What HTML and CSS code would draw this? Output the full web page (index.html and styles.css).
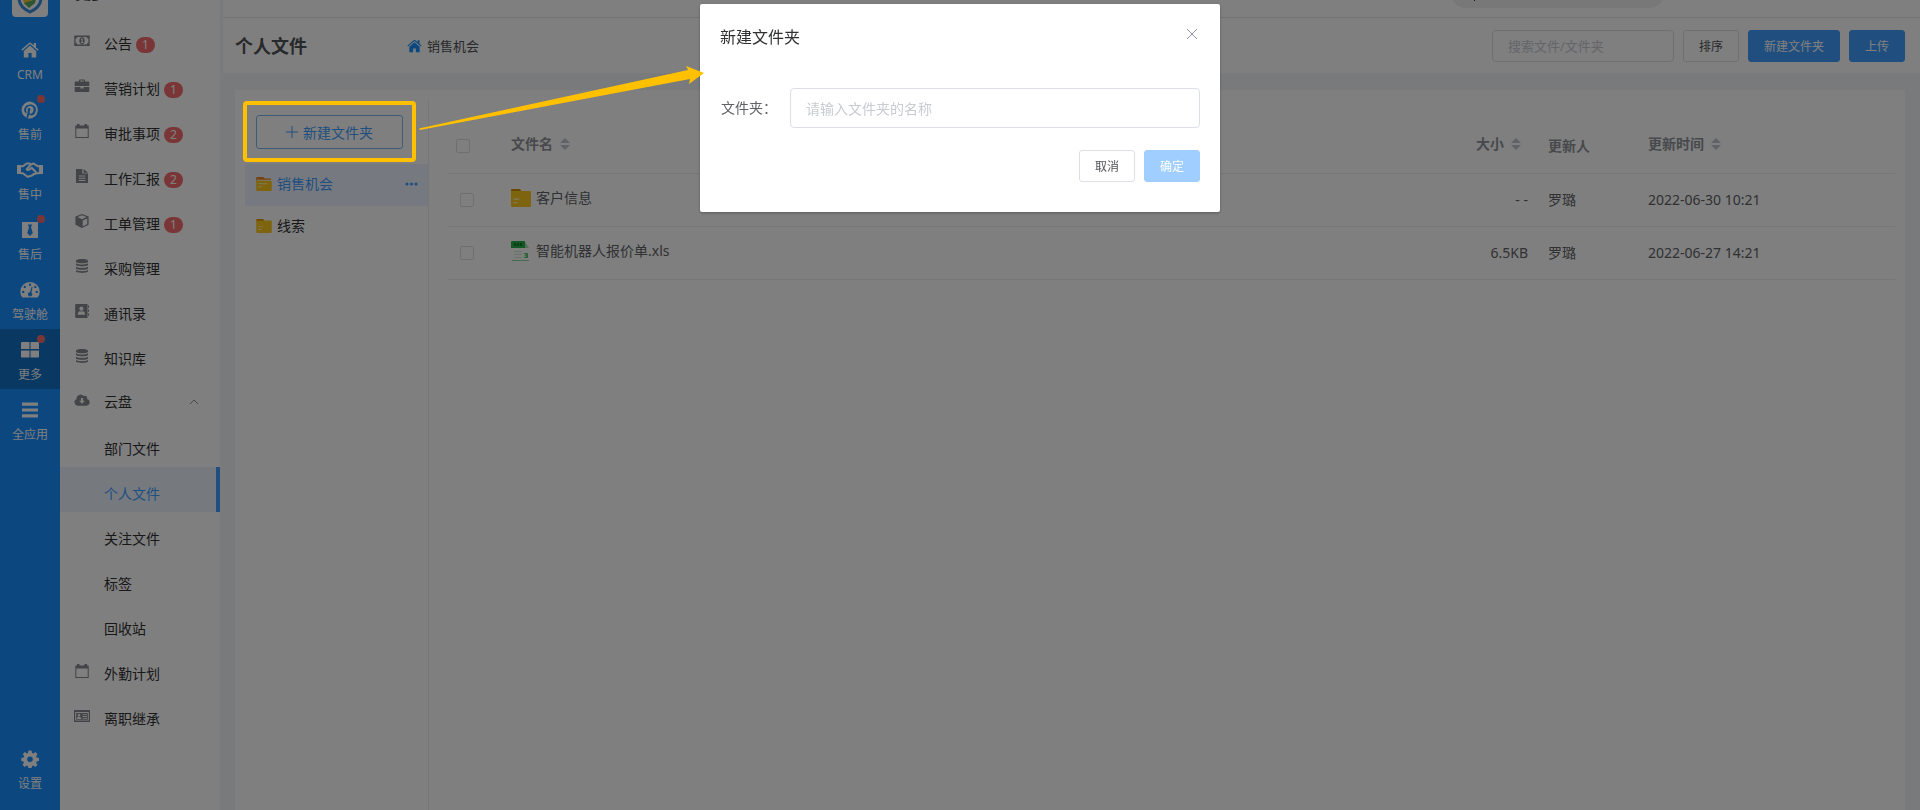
FILE: index.html
```
<!DOCTYPE html>
<html lang="zh-CN">
<head>
  <meta charset="UTF-8" />
  <title>个人文件</title>
  <link rel="stylesheet" href="styles.css">
</head>
<body>
  <!-- 图标 -->
  <svg class="sprite" aria-hidden="true">
    <symbol id="i-home" viewBox="0 0 18 16"><path d="M9 3.6 2.8 8.9V15q0 .6.6.6h4V11h3.2v4.6h4q.6 0 .6-.6V8.9zM17.6 7.6 15 5.4V1h-2.300v2.400L10 1Q9 .2 8 1L.4 7.600l.9 1.100L9 2.100l7.700 6.600z"/></symbol>
    <symbol id="i-pin" viewBox="0 0 18 18"><path fill-rule="evenodd" d="M9 .5a8.500 8.500 0 0 0-3.300 16.300c-.1-.7 0-1.600.2-2.300l1-4.200s-.3-.6-.3-1.300c0-1.200.7-2.100 1.600-2.100.8 0 1.200.6 1.200 1.200 0 .8-.5 1.900-.8 3-.2.900.5 1.600 1.300 1.600 1.600 0 2.700-2 2.700-4.400 0-1.800-1.200-3.200-3.500-3.200a4 4 0 0 0-4.100 4c0 .7.2 1.200.5 1.600l.1.500-.2.700q-.1.300-.5.200C3.700 11.600 3.200 10.400 3.200 9c0-2.500 2.100-5.500 6.200-5.500 3.300 0 5.500 2.400 5.500 5 0 3.400-1.900 5.900-4.700 5.900-.9 0-1.800-.5-2.100-1.100l-.6 2.200c-.2.700-.500 1.300-.9 1.800A8.500 8.500 0 1 0 9 .5z"/></symbol>
    <symbol id="i-hand" viewBox="0 0 26 16"><path d="M0 3h4v9H0zM22 3h4v9h-4z"/><path fill="none" stroke="currentColor" stroke-width="2" stroke-linejoin="round" d="M4 4.200h2L9.500 1.500h3L14 2.500 16.500 1.500l4 2.700H22M4 11.200h1.800l4.400 3.300q1.300.6 2-.4 1.500.6 2.200-.7 1.600.3 1.900-1.300l1.600-.1q1.500-.4.9-2L14.600 5.800l-2.100 1.700q-1.700 1.200-2.800-.4L13.500 3M22 11.200h-4"/></symbol>
    <symbol id="i-tie" viewBox="0 0 18 18"><path fill-rule="evenodd" d="M1 1h16v16H1zM6.800 3.500 8 6.200 6.200 12 9 15l2.800-3L10 6.200l1.200-2.700z"/></symbol>
    <symbol id="i-dash" viewBox="0 0 20 17"><path fill-rule="evenodd" d="M10 .5A9.700 9.700 0 0 0 .3 10.200q0 3 1.700 5.300.4.500 1 .5h14q.6 0 1-.5 1.700-2.300 1.700-5.300A9.700 9.700 0 0 0 10 .5zM10 2a1.200 1.200 0 1 1 0 2.400A1.200 1.200 0 0 1 10 2zM4.800 4.200a1.200 1.200 0 1 1 0 2.400 1.200 1.200 0 0 1 0-2.400zM3.200 9.200a1.200 1.200 0 1 1 0 2.400 1.200 1.200 0 0 1 0-2.400zM15.300 4.200a1.200 1.200 0 1 1 0 2.400 1.200 1.200 0 0 1 0-2.400zM16.800 9.200a1.200 1.200 0 1 1 0 2.400 1.200 1.200 0 0 1 0-2.400zM11.600 5.300l1 .2-1.200 5.400a2.200 2.200 0 1 1-1.300-.4z"/></symbol>
    <symbol id="i-grid" viewBox="0 0 18 16"><path d="M1 0h7q.5 0 .5.500v6.500H0V1q0-1 1-1zM9.500 0H17q1 0 1 1v6H9.500zM0 8.500h8.500v7H1q-1 0-1-1zM9.500 8.500H18v6q0 1-1 1H9.500z"/></symbol>
    <symbol id="i-bars" viewBox="0 0 18 16"><path d="M1 .5h16v3.200H1zM1 6.400h16v3.200H1zM1 12.300h16v3.200H1z"/></symbol>
    <symbol id="i-gear" viewBox="0 0 18 18"><path fill-rule="evenodd" d="M7.500.5h3l.5 2.400 1.400.6 2-1.400 2.100 2.100-1.400 2 .6 1.400 2.300.4v3l-2.400.4-.5 1.400 1.400 2-2.100 2.100-2-1.400-1.400.6-.5 2.400h-3L7 16.100l-1.400-.6-2 1.400-2.100-2.100 1.400-2-.5-1.400L.3 11V8l2.300-.400.600-1.400-1.400-2 2.100-2.100 2 1.400L7 2.900zM9 6.400a2.800 2.800 0 1 0 0 5.600 2.800 2.800 0 0 0 0-5.600z"/></symbol>
    <symbol id="i-money" viewBox="0 0 16 12"><path fill-rule="evenodd" d="M.3.500h15.400v10.500H.3zM3.300 2q-.2 1.500-1.700 1.700v4q1.500.2 1.700 1.800h9.400q.2-1.600 1.700-1.800v-4Q12.900 3.500 12.700 2zM8 2.300c1.600 0 2.700 1.500 2.700 3.400S9.600 9.200 8 9.200 5.300 7.700 5.300 5.700 6.400 2.300 8 2.300zM7 4.200v.9h.6v2H7V8h2.200v-.9h-.6V3.600H8z"/></symbol>
    <symbol id="i-case" viewBox="0 0 16 14"><path fill-rule="evenodd" d="M5 2.500V1.200Q5 .5 5.700.5h4.600q.7 0 .7.700v1.300h3.300q1 0 1 1V7H.7V3.500q0-1 1-1zM6.200 2.500h3.600v-.9H6.200zM.7 8h5.700v1.500h3.200V8h5.700v4q0 1-1 1H1.700q-1 0-1-1z"/></symbol>
    <symbol id="i-cal" viewBox="1 1 14 14"><path fill-rule="evenodd" d="M3 1h2.500v1.500h5V1H13v1.500h1.700V15H1.300V2.500H3zM2.300 5.500V14h11.400V5.500z"/></symbol>
    <symbol id="i-doc" viewBox="1 1 14 14"><path fill-rule="evenodd" d="M2 1h6.300v4.600h5.700V15H2zM9.600 1 14 4.800H9.600zM4.800 7.500v1h6.500v-1zM4.800 9.800v1h6.500v-1zM4.800 12v1h6.500v-1z"/></symbol>
    <symbol id="i-cube" viewBox="1 1 14 14"><path fill-rule="evenodd" d="M8 1 14.600 3.500v8.200L8 15 1.400 11.700V3.500zM8 2.200 3.500 4.100 8 6.200l4.500-2.100zM8.700 7.500v6l4.500-2.500V5.400z"/></symbol>
    <symbol id="i-db" viewBox="1 1 14 14"><path d="M2 2.900C2 .4 14 .4 14 2.900v.5C14 5.900 2 5.900 2 3.400zM2 5.300c2.500 1.600 9.500 1.600 12 0v1.500c0 2.100-12 2.100-12 0zM2 8.700c2.500 1.600 9.500 1.600 12 0v1.500c0 2.100-12 2.100-12 0zM2 12.100c2.500 1.600 9.500 1.600 12 0v1.200c0 2.100-12 2.100-12 0z"/></symbol>
    <symbol id="i-book" viewBox="1 1 14 14"><path fill-rule="evenodd" d="M2 1h11.500v14H2Q1.200 15 1.200 14V1.900Q1.200 1 2 1zM7.400 3.600a2.100 2.100 0 1 0 0 4.200 2.100 2.100 0 0 0 0-4.200zM3.800 11.800h7.200q0-3.200-2-3.500-1.500.6-3.200 0-2 .3-2 3.500zM14 2.500h1v2.200H14zM14 6.500h1v2.200H14zM14 10.500h1v2.200H14z"/></symbol>
    <symbol id="i-cloud" viewBox="0 1 16 12"><path fill-rule="evenodd" d="M13 6a2.300 2.300 0 0 0-3.300-2.900A4 4 0 0 0 2.600 6 3.500 3.500 0 0 0 3.800 12.700h8.700A3.400 3.400 0 0 0 13 6zM7 5h2v2.700h1.900L8 10.800 5.100 7.700H7z"/></symbol>
    <symbol id="i-card" viewBox="0 0 16 12"><path fill-rule="evenodd" d="M0 0h16v12H0zM1.200 2v8.500h13.600V2zM2.200 3h11.600v6.700H2.200zM5 4a1.300 1.300 0 1 0 0 2.600A1.300 1.300 0 0 0 5 4zM2.800 8.900h4.400Q7.200 7 6 6.900H4Q2.800 7 2.800 8.900zM8.500 4.200v.9h4.500v-.9zM8.500 6v.9h4.500V6zM8.500 7.900v.9h4.500v-.9z"/></symbol>
    <symbol id="i-folder" viewBox="0 0 20 18"><path fill="#d98f00" d="M0 1q0-1 1-1h8l2 3H0z"/><path fill="#ffc81e" d="M0 2h19q1 0 1 1v14q0 1-1 1H1q-1 0-1-1z"/><path fill="#fff2b8" d="M2.500 9.500h6v1.200h-6zM2.500 13h4v1.200h-4z"/></symbol>
    <symbol id="i-folder-open" viewBox="0 0 20 18"><path fill="#e9862a" d="M0 1q0-1 1-1h8l2 2h8v3H0z"/><path fill="#ffe9a8" d="M1 3.500h18V6H1z"/><path fill="#ffc81e" d="M0 5h20v12q0 1-1 1H1q-1 0-1-1z"/><path fill="#fff2b8" d="M2.500 8h12v1.200h-12zM2.500 12h5v1.200h-5z"/></symbol>
    <symbol id="i-xls" viewBox="0 0 20 20"><path fill="#fff" d="M1 7h17v13H1z"/><path fill="#27b148" d="M0 1q0-1 1-1h13v7H0z"/><path fill="#9fe0b0" d="m14 1 4 6h-4z"/><path fill="#0f7a2c" d="M3 2h2v3H3zM6 2h2v3H6zM9 2h2v3H9z"/><path fill="#c9ecd2" d="M3 10h8v1H3zM3 13h8v1H3zM3 16h8v1H3z"/><path fill="#8fd6a2" d="M1 19h17v1H1z"/><path fill="#5cc777" d="M13 12h4v5h-4v-1.200h2v-1h-1.500v-1.200H15v-.6h-2z"/></symbol>
  </svg>

  <div class="app">
    <nav class="rail">
      <div class="logo">
        <svg viewBox="0 0 36 36"><path fill="#fff" stroke="#3a8ee0" stroke-width="3" d="M7 8q11-7 22 0v9q0 9-11 14Q7 26 7 17z"/><path fill="#f2c230" d="m11 19 5-4 9-5-4 8-8 6z"/><path fill="#58a85c" d="m12 22 9-3 4-5-2 8-6 5z"/></svg>
      </div>
      <a class="rail-item" href="#"><svg class="rail-icon"><use href="#i-home"/></svg>CRM</a>
      <a class="rail-item has-dot" href="#"><svg class="rail-icon"><use href="#i-pin"/></svg>售前</a>
      <a class="rail-item" href="#"><svg class="rail-icon wide"><use href="#i-hand"/></svg>售中</a>
      <a class="rail-item has-dot" href="#"><svg class="rail-icon"><use href="#i-tie"/></svg>售后</a>
      <a class="rail-item" href="#"><svg class="rail-icon dash"><use href="#i-dash"/></svg>驾驶舱</a>
      <a class="rail-item has-dot active" href="#"><svg class="rail-icon"><use href="#i-grid"/></svg>更多</a>
      <a class="rail-item" href="#"><svg class="rail-icon"><use href="#i-bars"/></svg>全应用</a>
      <a class="rail-item setting" href="#"><svg class="rail-icon"><use href="#i-gear"/></svg>设置</a>
    </nav>

    <aside class="menu">
      <div class="menu-title">更多</div>
      <a class="menu-item" href="#"><svg class="menu-icon"><use href="#i-money"/></svg><span>公告</span><b class="badge">1</b></a>
      <a class="menu-item" href="#"><svg class="menu-icon"><use href="#i-case"/></svg><span>营销计划</span><b class="badge">1</b></a>
      <a class="menu-item" href="#"><svg class="menu-icon"><use href="#i-cal"/></svg><span>审批事项</span><b class="badge">2</b></a>
      <a class="menu-item" href="#"><svg class="menu-icon"><use href="#i-doc"/></svg><span>工作汇报</span><b class="badge">2</b></a>
      <a class="menu-item" href="#"><svg class="menu-icon"><use href="#i-cube"/></svg><span>工单管理</span><b class="badge">1</b></a>
      <a class="menu-item" href="#"><svg class="menu-icon"><use href="#i-db"/></svg><span>采购管理</span></a>
      <a class="menu-item" href="#"><svg class="menu-icon"><use href="#i-book"/></svg><span>通讯录</span></a>
      <a class="menu-item" href="#"><svg class="menu-icon"><use href="#i-db"/></svg><span>知识库</span></a>
      <a class="menu-item group" href="#"><svg class="menu-icon"><use href="#i-cloud"/></svg><span>云盘</span><svg class="chevron" viewBox="0 0 10 6"><path d="m1 5 4-4 4 4"/></svg></a>
      <a class="menu-item sub" href="#"><span>部门文件</span></a>
      <a class="menu-item sub active" href="#"><span>个人文件</span></a>
      <a class="menu-item sub" href="#"><span>关注文件</span></a>
      <a class="menu-item sub" href="#"><span>标签</span></a>
      <a class="menu-item sub" href="#"><span>回收站</span></a>
      <a class="menu-item" href="#"><svg class="menu-icon"><use href="#i-cal"/></svg><span>外勤计划</span></a>
      <a class="menu-item" href="#"><svg class="menu-icon"><use href="#i-card"/></svg><span>离职继承</span></a>
    </aside>

    <main class="main">
      <div class="topbar">
        <div class="top-search"><svg viewBox="0 0 12 12"><path d="M8.500 8.500 11 11M9.500 5.500a4 4 0 1 1-8 0 4 4 0 0 1 8 0z"/></svg></div>
      </div>
      <header class="page-header">
        <h1>个人文件</h1>
        <a class="crumb" href="#"><svg class="crumb-icon"><use href="#i-home"/></svg>销售机会</a>
        <div class="actions">
          <input class="search" type="text" placeholder="搜索文件/文件夹" aria-label="搜索文件/文件夹">
          <button class="btn">排序</button>
          <button class="btn primary">新建文件夹</button>
          <button class="btn primary">上传</button>
        </div>
      </header>

      <section class="panel">
        <div class="tree">
          <button class="new-folder"><svg viewBox="0 0 12 12"><path d="M6 0v12M0 6h12"/></svg>新建文件夹</button>
          <a class="tree-item active" href="#"><svg class="tree-icon"><use href="#i-folder-open"/></svg>销售机会<svg class="more" viewBox="0 0 13 4"><circle cx="2" cy="2" r="1.600"/><circle cx="6.500" cy="2" r="1.600"/><circle cx="11" cy="2" r="1.600"/></svg></a>
          <a class="tree-item" href="#"><svg class="tree-icon"><use href="#i-folder"/></svg>线索</a>
        </div>

        <table class="files">
          <colgroup>
            <col class="c-check"><col><col class="c-size"><col class="c-user"><col class="c-time">
          </colgroup>
          <thead>
            <tr>
              <th class="check"><input type="checkbox" aria-label="全选"></th>
              <th><div class="sortable">文件名<i class="sort"></i></div></th>
              <th class="size"><div class="sortable">大小<i class="sort"></i></div></th>
              <th>更新人</th>
              <th><div class="sortable">更新时间<i class="sort"></i></div></th>
            </tr>
          </thead>
          <tbody>
            <tr>
              <td class="check"><input type="checkbox" aria-label="客户信息"></td>
              <td><div class="name"><svg class="file-icon folder"><use href="#i-folder"/></svg>客户信息</div></td>
              <td class="size">- -</td>
              <td>罗璐</td>
              <td>2022-06-30 10:21</td>
            </tr>
            <tr>
              <td class="check"><input type="checkbox" aria-label="智能机器人报价单.xls"></td>
              <td><div class="name"><svg class="file-icon"><use href="#i-xls"/></svg>智能机器人报价单.xls</div></td>
              <td class="size">6.5KB</td>
              <td>罗璐</td>
              <td>2022-06-27 14:21</td>
            </tr>
          </tbody>
        </table>
      </section>
    </main>
  </div>

  <!-- 弹窗 -->
  <div class="mask">
    <form class="dialog" role="dialog" aria-labelledby="dialog-title">
      <div class="dialog-header">
        <h2 id="dialog-title">新建文件夹</h2>
        <button type="button" class="close" aria-label="关闭"><svg viewBox="0 0 10 10"><path d="m0 0 10 10M10 0 0 10"/></svg></button>
      </div>
      <div class="form-row">
        <label for="folder-name">文件夹：</label>
        <input type="text" id="folder-name" placeholder="请输入文件夹的名称">
      </div>
      <div class="dialog-footer">
        <button type="button" class="btn">取消</button>
        <button type="submit" class="btn primary" disabled>确定</button>
      </div>
    </form>
  </div>

  <!-- 操作指引 -->
  <div class="guide-box"></div>
  <svg class="guide-arrow" viewBox="0 0 286 66"><path d="M0 62.500 269 4 267 0 285 7 270 18 271 13 1 64z"/></svg>
</body>
</html>
```

FILE: styles.css
```
* {
  box-sizing: border-box;
}
body {
  margin: 0;
  font-family: "Noto Sans", "Noto Sans CJK SC", sans-serif;
  font-size: 14px;
  line-height: 20px;
  color: #303133;
  background-color: #f3f5f8;
}
a {
  color: inherit;
  text-decoration: none;
}
button, input {
  font-family: inherit;
}
svg {
  fill: currentColor;
  flex-shrink: 0;
}
.sprite {
  position: absolute;
  width: 0;
  height: 0;
}
.app {
  display: flex;
  height: 100vh;
  overflow: hidden;
}

/* 左侧导航 */
.rail {
  width: 60px;
  display: flex;
  flex-direction: column;
  align-items: center;
  flex-shrink: 0;
  padding-bottom: 12px;
  background-color: #1890ff;
  color: #fff;
}
.logo {
  width: 36px;
  height: 36px;
  margin: -19px 0 12px;
  flex-shrink: 0;
  border-radius: 4px;
  background-color: #fff;
}
.logo svg {
  display: block;
}
.rail-item {
  position: relative;
  width: 60px;
  height: 60px;
  display: flex;
  flex-direction: column;
  align-items: center;
  padding-top: 12px;
  font-size: 12px;
  gap: 6px;
}
.rail-icon {
  width: 18px;
  height: 18px;
}
.rail-icon.wide {
  width: 26px;
}
.rail-icon.dash {
  width: 20px;
}
.rail-item.active {
  background-color: #1270c6;
}
.has-dot::after {
  content: "";
  position: absolute;
  top: 6px;
  right: 15px;
  width: 8px;
  height: 8px;
  border-radius: 50%;
  background-color: #f56c6c;
}
.setting {
  margin-top: auto;
}

/* 二级菜单 */
.menu {
  width: 160px;
  flex-shrink: 0;
  background-color: #fff;
}
.menu-title {
  height: 34px;
  margin-top: -17px;
  padding-left: 15px;
  font-size: 16px;
  font-weight: bold;
}
.menu-item {
  height: 45px;
  display: flex;
  align-items: center;
  padding: 8px 21px 0 14px;
}
.menu-icon {
  width: 16px;
  height: 14px;
  margin: 0 14px 5px 0;
  color: #86888e;
}
.menu-item.group {
  padding-top: 5px;
}
.menu-item.sub {
  padding-left: 44px;
}
.menu-item.active {
  background-color: #ecf5ff;
  border-right: 4px solid #409eff;
  color: #409eff;
}
.badge {
  margin: 2px 0 0 4px;
  width: 19px;
  height: 16px;
  border-radius: 8px;
  background-color: #f56c6c;
  color: #fff;
  font-size: 12px;
  font-weight: normal;
  line-height: 16px;
  text-align: center;
}
.chevron {
  width: 10px;
  height: 6px;
  margin-left: auto;
  fill: none;
  stroke: #909399;
}

/* 主区域 */
.main {
  flex: 1;
  min-width: 0;
  display: flex;
  flex-direction: column;
  padding-left: 3px;
}
.topbar {
  height: 18px;
  display: flex;
  justify-content: flex-end;
  border-bottom: 1px solid #e6e6e6;
  background-color: #fff;
}
.top-search {
  width: 215px;
  height: 32px;
  margin: -24px 255px 0 0;
  padding: 14px 0 0 14px;
  border-radius: 16px;
  background-color: #f0f0f0;
}
.top-search svg {
  display: block;
  width: 12px;
  height: 12px;
  fill: none;
  stroke: #303133;
}
.page-header {
  height: 56px;
  display: flex;
  align-items: center;
  padding: 0 15px 0 12px;
  border-bottom: 1px solid #f5f5f5;
  background-color: #fff;
  color: #505255;
}
h1 {
  width: 172px;
  margin: 0;
  font-size: 18px;
}
.crumb {
  display: flex;
  align-items: center;
  gap: 5px;
  font-size: 13px;
}
.crumb-icon {
  width: 15px;
  height: 14px;
  color: #1890ff;
}
.actions {
  display: flex;
  gap: 9px;
  margin-left: auto;
}
.search {
  width: 182px;
  height: 32px;
  padding: 0 15px;
  border: 1px solid #dcdfe6;
  border-radius: 4px;
  background-color: #fff;
  font-size: 13px;
}
input::placeholder {
  color: #c8cbd2;
}
.btn {
  height: 32px;
  padding: 0 15px;
  border: 1px solid #dcdfe6;
  border-radius: 3px;
  background-color: #fff;
  color: #505255;
  font-size: 12px;
}
.btn.primary {
  border-color: #409eff;
  background-color: #409eff;
  color: #fff;
}
.btn.primary:disabled {
  border-color: #a0cfff;
  background-color: #a0cfff;
}
.panel {
  flex: 1;
  display: flex;
  align-items: flex-start;
  margin: 16px 15px 0 12px;
  padding: 10px 10px 0;
  background-color: #fff;
}
.tree {
  width: 184px;
  flex-shrink: 0;
  align-self: stretch;
  border-right: 1px solid #ebeef5;
}
.new-folder {
  width: 147px;
  height: 34px;
  display: flex;
  align-items: center;
  justify-content: center;
  gap: 5px;
  margin: 15px 11px;
  border: 1px solid #7db9f5;
  border-radius: 3px;
  background-color: #fff;
  color: #409eff;
  font-size: 14px;
}
.new-folder svg {
  width: 12px;
  height: 12px;
  stroke: #409eff;
}
.tree-item {
  height: 42px;
  display: flex;
  align-items: center;
  gap: 5px;
  padding: 0 10px 2px 11px;
}
.tree-item.active {
  background-color: #ecf3ff;
  color: #409eff;
}
.tree-icon {
  width: 16px;
  height: 14px;
}
.more {
  width: 13px;
  height: 4px;
  margin-left: auto;
}

/* 文件列表 */
.files {
  flex: 1;
  margin: 20px 0 0 19px;
  border-collapse: collapse;
  table-layout: fixed;
  color: #606266;
}
.c-check {
  width: 53px;
}
.c-size {
  width: 120px;
}
.c-user {
  width: 100px;
}
.c-time {
  width: 257px;
}
.files th, .files td {
  height: 53px;
  padding: 1px 10px 0;
  border-bottom: 1px solid #ebeef5;
  text-align: left;
}
.files th {
  padding-top: 0;
  color: #909399;
}
.files .size {
  text-align: right;
}
.files th.size {
  padding-right: 17px;
}
.files .check {
  padding: 0 0 0 12px;
}
.files th.check {
  padding-left: 8px;
}
.files input {
  display: block;
  appearance: none;
  width: 14px;
  height: 14px;
  margin: 0;
  border: 1px solid #dcdfe6;
  border-radius: 2px;
  background-color: #fff;
}
.sortable {
  display: flex;
  align-items: center;
  gap: 7px;
  padding-bottom: 4px;
}
.size .sortable {
  justify-content: flex-end;
}
.sort {
  display: flex;
  flex-direction: column;
  gap: 2px;
}
.sort::before, .sort::after {
  content: "";
  border: 5px solid transparent;
}
.sort::before {
  border-top: 0;
  border-bottom-color: #c0c4cc;
}
.sort::after {
  border-bottom: 0;
  border-top-color: #c0c4cc;
}
.name {
  display: flex;
  align-items: center;
  gap: 5px;
  padding-bottom: 5px;
}
.file-icon {
  width: 20px;
  height: 20px;
}
.file-icon.folder {
  height: 18px;
}

/* 弹窗 */
.mask {
  position: fixed;
  inset: 0;
  display: flex;
  justify-content: center;
  align-items: flex-start;
  padding-top: 4px;
  background-color: rgba(0, 0, 0, 0.5);
}
.dialog {
  width: 520px;
  padding: 20px 20px 30px;
  border-radius: 2px;
  background-color: #fff;
  box-shadow: 0 1px 3px rgba(0, 0, 0, 0.3);
}
.dialog-header {
  display: flex;
  justify-content: space-between;
  align-items: flex-start;
  margin-bottom: 38px;
}
h2 {
  margin: 0;
  font-size: 16px;
  font-weight: normal;
  line-height: 26px;
}
.close {
  width: 16px;
  height: 20px;
  padding: 5px 3px;
  border: 0;
  background: none;
}
.close svg {
  display: block;
  width: 10px;
  height: 10px;
  fill: none;
  stroke: #909399;
}
.form-row {
  display: flex;
  align-items: center;
  margin-bottom: 22px;
  color: #606266;
}
.form-row label {
  width: 70px;
  padding-left: 1px;
}
.form-row input {
  flex: 1;
  height: 40px;
  padding: 0 15px;
  border: 1px solid #dcdfe6;
  border-radius: 4px;
  font-size: 14px;
}
.dialog-footer {
  display: flex;
  justify-content: flex-end;
  gap: 9px;
}

/* 指引标注 */
.guide-box {
  position: absolute;
  left: 243px;
  top: 101px;
  width: 173px;
  height: 61px;
  border: 4px solid #ffc000;
  border-radius: 4px;
}
.guide-arrow {
  position: absolute;
  left: 419px;
  top: 66px;
  width: 286px;
  height: 66px;
  fill: #ffc000;
}
```
